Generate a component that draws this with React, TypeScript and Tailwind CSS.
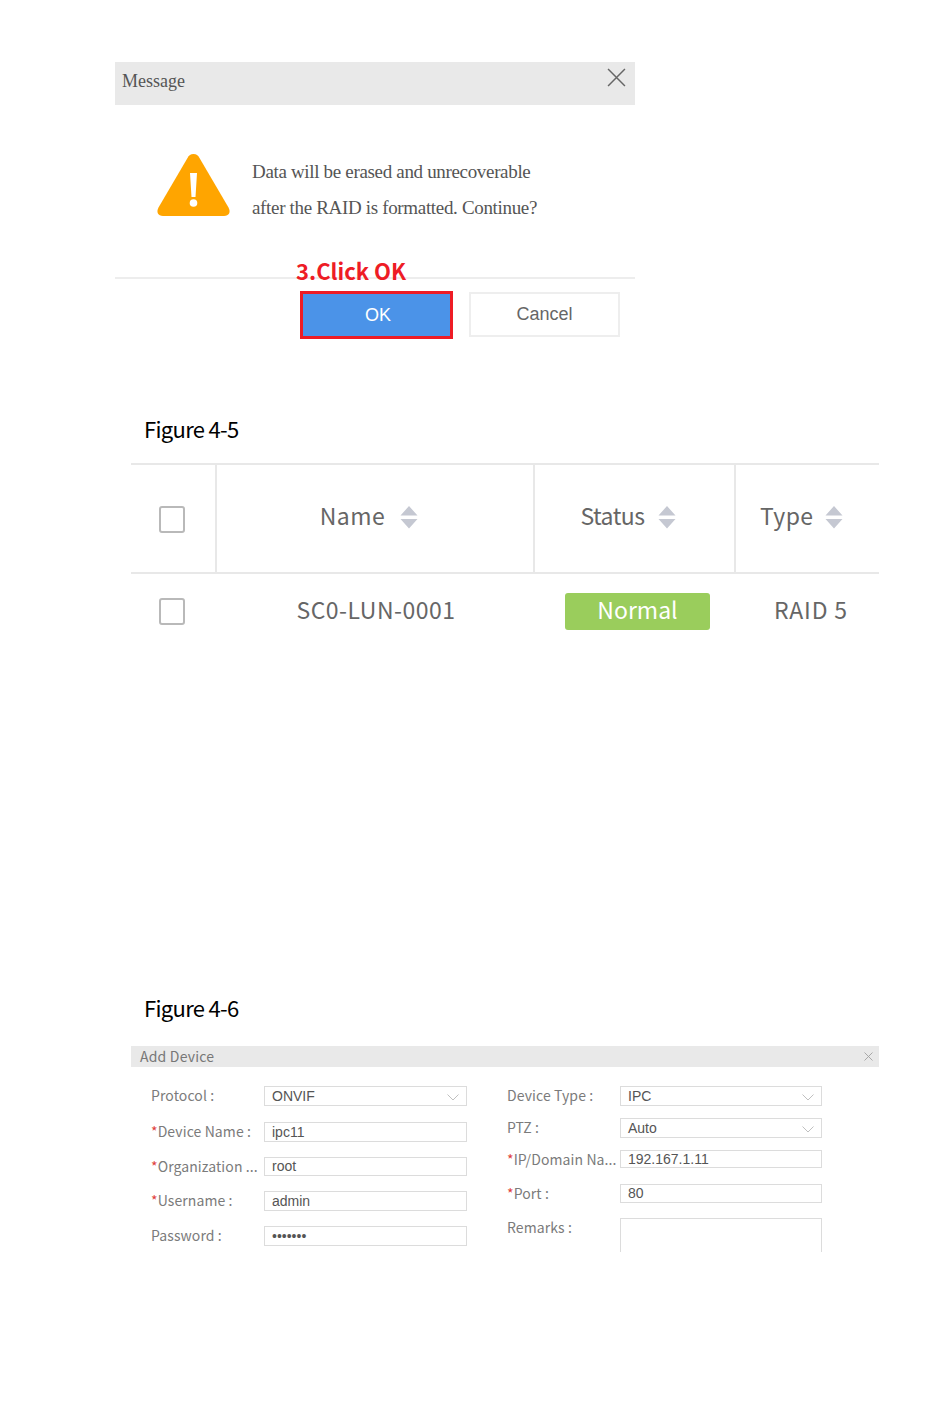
import React from 'react';

const cjk = "font-['Noto_Sans_CJK_SC',sans-serif]";
const arial = "font-['Liberation_Sans',sans-serif]";
const serif = "font-['Liberation_Serif',serif]";

const SortIcon = () => (
  <svg width="18" height="23" viewBox="0 0 18 23" className="shrink-0">
    <path d="M9 0 L17.5 9.5 H0.5 Z M0.5 13 H17.5 L9 22.5 Z" fill="#c5c8d2" />
  </svg>
);

const CloseIcon = ({ size, color }: { size: number; color: string }) => (
  <svg width={size} height={size} viewBox="0 0 18 18" className="shrink-0">
    <path d="M1 1 L17 17 M17 1 L1 17" stroke={color} strokeWidth={size > 12 ? 1.4 : 1.8} fill="none" />
  </svg>
);

const SelectArrow = () => (
  <svg width="12" height="7" viewBox="0 0 12 7" className="shrink-0 mt-[2px]">
    <path d="M0.5 0.5 L6 6 L11.5 0.5" stroke="#c0c0c0" strokeWidth="1" fill="none" />
  </svg>
);

const Checkbox = () => <div className="w-[26px] h-[27px] rounded-[3px] border-2 border-[#b9b9b9] bg-white" />;

interface FieldProps {
  label: string;
  required?: boolean;
  value?: string;
  select?: boolean;
  rowClass: string;
  boxClass: string;
}

const Field: React.FC<FieldProps> = ({ label, required, value, select, rowClass, boxClass }) => (
  <div className={`flex items-start ${rowClass}`}>
    <div className={`w-[113px] -mt-[1px] shrink-0 text-[14px] leading-[20px] tracking-[0.1px] text-[#7b7b7b] ${cjk} whitespace-nowrap`}>
      {required && <span className="text-[#e0403c]">*</span>}
      {label}
    </div>
    <div className={`${boxClass} flex items-center justify-between pl-[7px] pr-[7px] border border-[#dcdcdc] text-[14px] text-[#555] ${arial}`}>
      <span>{value}</span>
      {select && <SelectArrow />}
    </div>
  </div>
);

export default function App() {
  return (
    <div className="w-[950px] h-[1413px] bg-white overflow-hidden pt-[62px]">
      {/* message dialog */}
      <div className="ml-[115px] w-[520px]">
        <div className={`h-[43px] bg-[#e9e9e9] flex justify-between pl-[7px] pr-[9px] pt-[7px] text-[18px] leading-[24px] text-[#555] ${serif}`}>
          <span>Message</span>
          <div className="-mt-[1px]"><CloseIcon size={19} color="#666" /></div>
        </div>
        <div className="h-[174px] flex items-start border-b-2 border-[#ededed] pl-[41px] pt-[47px]">
          <svg width="75" height="65" viewBox="0 0 75 65" className="shrink-0">
            <path d="M37.5 2 C40.5 2 42 3.5 43.5 6 L72.5 55.5 C75 60 73 64 68 64 H7 C2 64 0 60 2.5 55.5 L31.5 6 C33 3.5 34.5 2 37.5 2 Z" fill="#ffa500" />
            <path d="M34 21 H41 L39.5 45 H35.5 Z" fill="#fff" />
            <circle cx="37.5" cy="51" r="3.8" fill="#fff" />
          </svg>
          <div className={`ml-[21px] mt-[2px] text-[19px] leading-[36px] text-[#555] whitespace-nowrap tracking-[-0.33px] ${serif}`}>
            <div>Data will be erased and unrecoverable</div>
            <div>after the RAID is formatted. Continue?</div>
          </div>
        </div>
        <div className="relative flex items-start pl-[185px] pt-[12px]">
          <span className={`absolute left-[181px] -top-[24px] text-[22px] leading-[30px] font-bold text-[#ee1c25] whitespace-nowrap ${cjk}`}>
            3.Click OK
          </span>
          <div className={`w-[153px] h-[48px] bg-[#4b93e8] border-[3px] border-[#ee1c25] flex items-center justify-center pl-[3px] text-[18px] text-white ${arial}`}>
            OK
          </div>
          <div className={`ml-[16px] mt-[1px] w-[151px] h-[45px] border-2 border-[#eeeeee] flex items-center justify-center text-[18px] text-[#666] ${arial}`}>
            Cancel
          </div>
        </div>
      </div>

      {/* figure 4-5 */}
      <div className={`ml-[144px] mt-[71px] text-[22px] leading-[36px] text-black tracking-[-0.7px] ${cjk}`}>Figure 4-5</div>
      <div className={`ml-[131px] mt-[17px] w-[748px] text-[23px] text-[#666] ${cjk}`}>
        <div className="h-[111px] flex border-y-2 border-[#e8e8e8]">
          <div className="w-[86px] border-r-2 border-[#e8e8e8] flex items-center pl-[28px] pt-[2px]"><Checkbox /></div>
          <div className="w-[318px] border-r-2 border-[#e8e8e8] flex items-center justify-center gap-[15px] pr-[12px] pb-[3px]">
            <span className="-mt-[4px] tracking-[0.5px]">Name</span><SortIcon />
          </div>
          <div className="w-[201px] border-r-2 border-[#e8e8e8] flex items-center justify-center gap-[13px] pr-[13px] pb-[3px]">
            <span className="-mt-[4px] tracking-[-0.5px]">Status</span><SortIcon />
          </div>
          <div className="flex-1 flex items-center gap-[11px] pl-[24px] pb-[3px]">
            <span className="-mt-[4px] tracking-[0.4px]">Type</span><SortIcon />
          </div>
        </div>
        <div className="flex items-center h-[74px]">
          <div className="w-[86px] pl-[28px]"><Checkbox /></div>
          <div className="w-[318px] text-center whitespace-nowrap tracking-[0.5px] -mt-[4px]">SC0-LUN-0001</div>
          <div className="w-[201px] pl-[30px]">
            <div className="w-[145px] h-[37px] rounded-[3px] bg-[#9acd5c] text-white flex items-center justify-center pb-[3px]">Normal</div>
          </div>
          <div className="pl-[38px] whitespace-nowrap tracking-[0.8px] -mt-[4px]">RAID 5</div>
        </div>
      </div>

      {/* figure 4-6 */}
      <div className={`ml-[144px] mt-[341px] text-[22px] leading-[36px] text-black tracking-[-0.7px] ${cjk}`}>Figure 4-6</div>
      <div className="ml-[131px] mt-[21px] w-[748px]">
        <div className={`h-[21px] bg-[#e9e9e9] flex items-center justify-between pl-[9px] pr-[6px] pb-[1px] text-[14px] tracking-[0.2px] text-[#777] ${cjk}`}>
          <span>Add Device</span>
          <CloseIcon size={9} color="#a0a0a0" />
        </div>
        <div className="flex pl-[20px]">
          <div className="w-[356px]">
            <Field label="Protocol :" value="ONVIF" select rowClass="mt-[19px]" boxClass="w-[203px] h-[20px]" />
            <Field label="Device Name :" required value="ipc11" rowClass="mt-[16px]" boxClass="w-[203px] h-[20px]" />
            <Field label="Organization ..." required value="root" rowClass="mt-[15px]" boxClass="w-[203px] h-[19px]" />
            <Field label="Username :" required value="admin" rowClass="mt-[15px]" boxClass="w-[203px] h-[20px]" />
            <Field label="Password :" value="•••••••" rowClass="mt-[15px]" boxClass="w-[203px] h-[20px]" />
          </div>
          <div>
            <Field label="Device Type :" value="IPC" select rowClass="mt-[19px]" boxClass="w-[202px] h-[20px]" />
            <Field label="PTZ :" value="Auto" select rowClass="mt-[12px]" boxClass="w-[202px] h-[20px]" />
            <Field label="IP/Domain Na..." required value="192.167.1.11" rowClass="mt-[12px]" boxClass="w-[202px] h-[18px]" />
            <Field label="Port :" required value="80" rowClass="mt-[15px]" boxClass="w-[202px] h-[19px]" />
            <Field label="Remarks :" rowClass="mt-[15px]" boxClass="w-[202px] h-[34px] border-b-0" />
          </div>
        </div>
      </div>
    </div>
  );
}
